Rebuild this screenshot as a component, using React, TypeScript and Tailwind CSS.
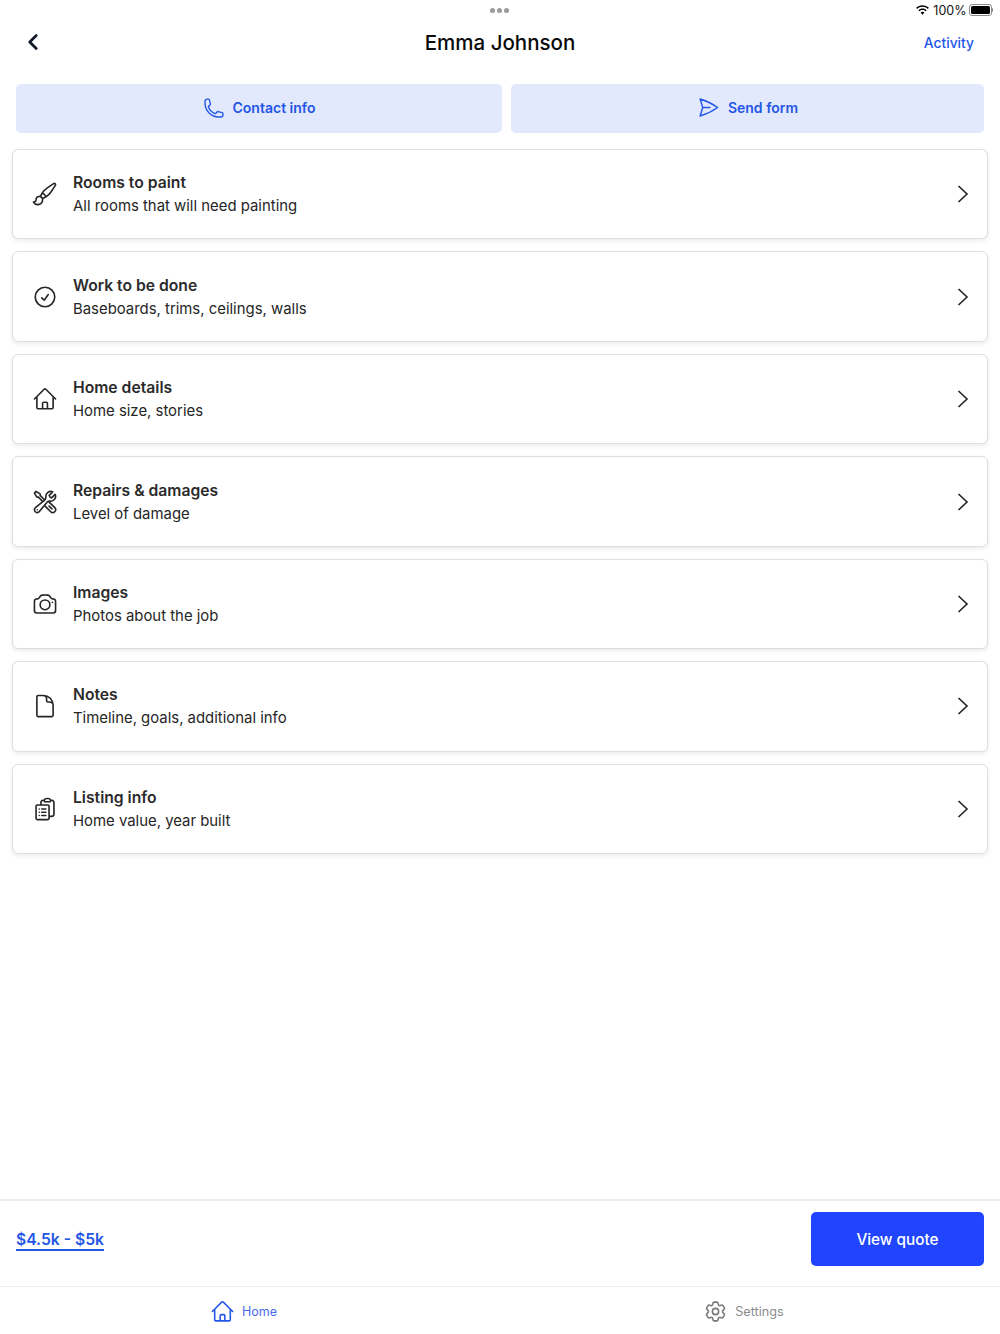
import { ReactNode } from "react";
import { ChevronLeft } from "lucide-react";
import {
  HiOutlinePhone,
  HiOutlinePaperAirplane,
  HiOutlinePaintBrush,
  HiOutlineCheckCircle,
  HiOutlineHome,
  HiOutlineWrenchScrewdriver,
  HiOutlineCamera,
  HiOutlineDocument,
  HiOutlineClipboardDocumentList,
  HiOutlineCog6Tooth,
} from "react-icons/hi2";

const rows: { title: string; subtitle: string; icon: ReactNode }[] = [
  { title: "Rooms to paint", subtitle: "All rooms that will need painting", icon: <HiOutlinePaintBrush className="h-[26px] w-[26px]" /> },
  { title: "Work to be done", subtitle: "Baseboards, trims, ceilings, walls", icon: <HiOutlineCheckCircle className="h-[26px] w-[26px]" /> },
  { title: "Home details", subtitle: "Home size, stories", icon: <HiOutlineHome className="h-[26px] w-[26px]" /> },
  { title: "Repairs & damages", subtitle: "Level of damage", icon: <HiOutlineWrenchScrewdriver className="h-[26px] w-[26px]" /> },
  { title: "Images", subtitle: "Photos about the job", icon: <HiOutlineCamera className="h-[26px] w-[26px]" /> },
  { title: "Notes", subtitle: "Timeline, goals, additional info", icon: <HiOutlineDocument className="h-[26px] w-[26px]" /> },
  { title: "Listing info", subtitle: "Home value, year built", icon: <HiOutlineClipboardDocumentList className="h-[26px] w-[26px]" /> },
];

function StatusBar() {
  return (
    <div className="relative flex h-5 items-center justify-end pr-[7px]">
      {/* multitasking dots */}
      <div className="absolute left-[490px] top-[8px] flex gap-[2px]">
        <span className="h-[5px] w-[5px] rounded-full bg-[#9a9a9a]" />
        <span className="h-[5px] w-[5px] rounded-full bg-[#9a9a9a]" />
        <span className="h-[5px] w-[5px] rounded-full bg-[#9a9a9a]" />
      </div>
      <svg viewBox="0 0 16 12" className="h-[12px] w-[15px] text-black" fill="currentColor">
        <path d="M8 2.6c2.2 0 4.2.9 5.7 2.3l1.1-1.2C13 2 10.6 1 8 1S3 2 1.2 3.7l1.1 1.2C3.8 3.5 5.8 2.6 8 2.6Z" />
        <path d="M8 6.1c1.2 0 2.4.5 3.3 1.3l1.1-1.2C11.2 5.100 9.700 4.400 8 4.400s-3.200.7-4.400 1.800l1.100 1.200C5.600 6.600 6.800 6.100 8 6.100Z" />
        <path d="M8 7.900c-.8 0-1.500.3-2 .8L8 11l2-2.300c-.5-.5-1.200-.8-2-.8Z" />
      </svg>
      <span className="ml-[3px] pt-[2px] text-[12.5px] leading-none text-[#111111]">100%</span>
      <div className="ml-[2px] flex items-center">
        <div className="h-[12px] w-[23px] rounded-[3px] border border-[#8a8a8a] p-[1px]">
          <div className="h-full w-full rounded-[1.5px] bg-black" />
        </div>
        <div className="h-[4px] w-[1.5px] rounded-r-sm bg-[#8a8a8a]" />
      </div>
    </div>
  );
}

function ListRow({ title, subtitle, icon }: { title: string; subtitle: string; icon: ReactNode }) {
  return (
    <div className="flex h-[90.45px] items-center rounded-[6px] border border-[#dedede] bg-white pl-[19px] pr-[18px] shadow-[0_2px_4px_rgba(0,0,0,0.08)]">
      <div className="flex w-[41px] shrink-0 text-[#262626]">{icon}</div>
      <div className="min-w-0 flex-1 pt-[1px]">
        <div className="text-[15.7px] font-semibold leading-[23px] text-[#2b2b2b]">{title}</div>
        <div className="mt-[1px] text-[14.9px] leading-[23px] text-[#262626]">{subtitle}</div>
      </div>
      <svg viewBox="0 0 12 18" className="h-[18px] w-[12px] text-[#222222]" fill="none" stroke="currentColor" strokeWidth="1.6">
        <path d="M1.500 1l8.500 8-8.500 8" />
      </svg>
    </div>
  );
}

export default function App() {
  return (
    <div className="flex h-[1334px] w-[1000px] flex-col overflow-hidden bg-white font-['Inter',sans-serif]">
      <StatusBar />

      {/* header */}
      <div className="grid h-[44px] grid-cols-3 items-center pl-[20px] pr-[26px]">
        <ChevronLeft className="h-[26px] w-[26px] text-[#111827]" strokeWidth={2.5} />
        <h1 className="relative left-[3px] whitespace-nowrap pt-[3px] text-center text-[20.5px] font-medium text-[#0a0a0a]">Emma Johnson</h1>
        <a className="pt-[3px] text-right text-[13.8px] font-medium text-[#2456e6]">Activity</a>
      </div>

      {/* actions */}
      <div className="mt-[20px] flex gap-[9px] px-[16px]">
        <button className="flex h-[49px] w-[486px] items-center justify-center gap-[8px] rounded-[5px] bg-[#e3e9fc] pb-[2px] text-[14px] font-semibold text-[#2456e6]">
          <HiOutlinePhone className="h-[22px] w-[22px]" />
          Contact info
        </button>
        <button className="flex h-[49px] flex-1 items-center justify-center gap-[8px] rounded-[5px] bg-[#e3e9fc] pb-[2px] text-[14px] font-semibold text-[#2456e6]">
          <HiOutlinePaperAirplane className="h-[23px] w-[23px]" />
          Send form
        </button>
      </div>

      {/* list */}
      <div className="mt-[16px] flex flex-col gap-[12px] px-[12px]">
        {rows.map((row) => (
          <ListRow key={row.title} {...row} />
        ))}
      </div>

      <div className="flex-1" />

      {/* quote bar */}
      <div className="flex h-[87px] items-center justify-between border-t-2 border-[#ececec] px-[16px] pb-[10px]">
        <a className="mt-[5px] border-b-2 border-[#2456e6] text-[15.7px] font-semibold leading-[18px] text-[#2456e6]">$4.5k - $5k</a>
        <button className="h-[54px] w-[173px] rounded-[5px] bg-[#2145ff] pt-[3px] text-[15.3px] font-medium text-white">View quote</button>
      </div>

      {/* tab bar */}
      <div className="flex h-[48px] border-t border-[#eeeeee] pt-[2px]">
        <div className="flex w-[487px] items-center justify-center gap-[7px] text-[12.5px] text-[#4a6cec]">
          <HiOutlineHome className="h-[25px] w-[25px] text-[#2456e6]" />
          <span className="pt-[1px]">Home</span>
        </div>
        <div className="flex flex-1 items-center justify-center gap-[7px] text-[12.7px] text-[#8c8c8c]">
          <HiOutlineCog6Tooth className="h-[25px] w-[25px] text-[#777777]" />
          Settings
        </div>
      </div>
    </div>
  );
}
